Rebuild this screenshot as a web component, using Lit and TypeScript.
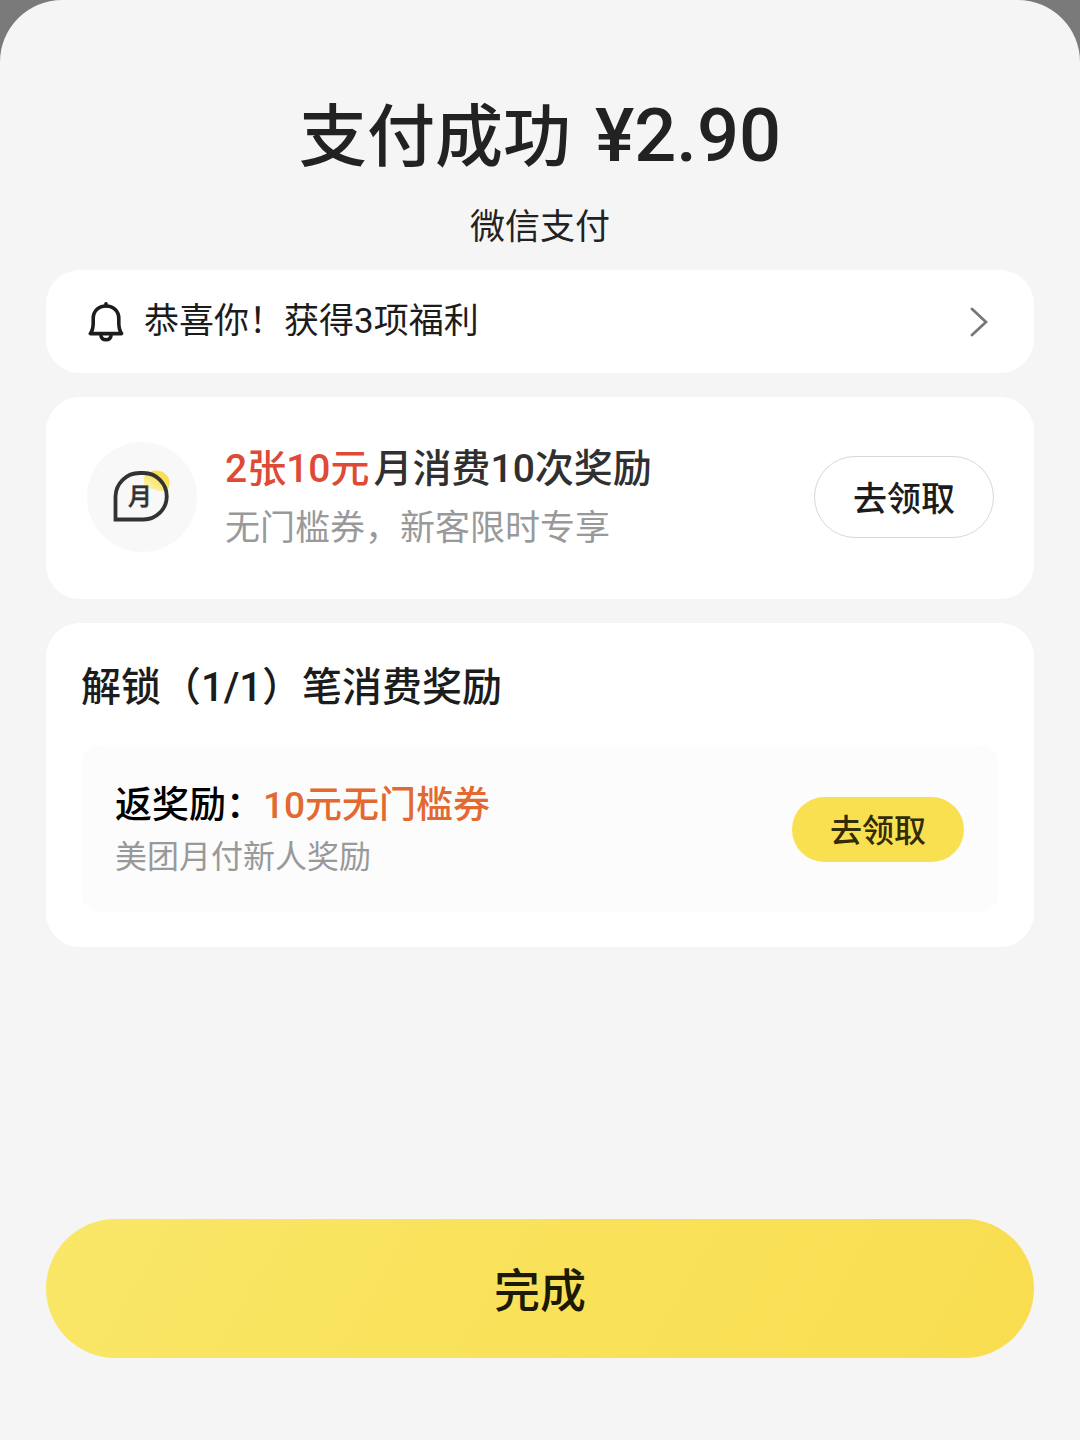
import { LitElement, html, css } from "lit";
import { customElement, property } from "lit/decorators.js";

@customElement("bell-icon")
class BellIcon extends LitElement {
  static styles = css`
    :host { display: block; }
    svg { display: block; width: 36px; height: 42px; }
  `;
  render() {
    return html`<svg viewBox="0 0 36 42" fill="none" stroke="#1c1c1c" stroke-width="3.6"
      stroke-linecap="round" stroke-linejoin="round" aria-hidden="true">
      <path d="M18 2.8V5" />
      <path d="M18 5C10.4 5 5.2 10.4 5.2 17.500V22C5.2 27 4.6 29.500 2.4 32.6H33.6C31.4 29.500 30.8 27 30.8 22V17.500C30.8 10.400 25.600 5 18 5Z" />
      <path d="M12.8 34C13.2 37 15 38.800 18 38.800C21 38.800 22.800 37 23.2 34" stroke-linecap="butt" />
    </svg>`;
  }
}

@customElement("month-badge")
class MonthBadge extends LitElement {
  static styles = css`
    :host { display: block; flex: none; }
    svg { display: block; width: 110px; height: 110px; }
    .mark {
      font-family: "Noto Sans CJK SC", sans-serif;
      font-size: 24px;
      font-weight: 500;
    }
  `;
  render() {
    return html`<svg viewBox="0 0 110 110" aria-hidden="true">
      <defs>
        <linearGradient id="glow" x1="1" y1="0" x2="0" y2="1">
          <stop offset="0.3" stop-color="#f9e04f" />
          <stop offset="1" stop-color="#fbf6c8" />
        </linearGradient>
      </defs>
      <circle cx="55" cy="55" r="55" fill="#f8f8f8" />
      <path d="M57 35C60 31 64 28.500 69 28.500C77 28.500 82.500 34 82.500 41C82.500 44 82 46 80 49C74 50 64 48 57 43Z" fill="url(#glow)" />
      <path d="M28.500 77.500V54.500A24 24 0 0 1 52.500 31H56.500A23.250 23.250 0 0 1 56.500 77.500Z"
        fill="none" stroke="#333" stroke-width="3.800" />
      <text class="mark" x="53" y="63" text-anchor="middle" fill="#333" stroke="#333" stroke-width="0.500">月</text>
    </svg>`;
  }
}

@customElement("reward-row")
class RewardRow extends LitElement {
  @property() variant: "outline" | "solid" = "outline";
  @property() note = "";

  static styles = css`
    :host { display: block; flex: 1; min-width: 0; }
    .row { display: flex; align-items: center; justify-content: space-between; gap: 24px; }
    .copy { min-width: 0; padding-top: 4px; }
    .title, .note { margin: 0; }
    .title { font-weight: 500; }
    .note { color: #999; }
    .action {
      flex: none;
      font: inherit;
      font-weight: 500;
      padding: 0 0 2px;
      cursor: pointer;
    }
    .outline .title { font-size: 39px; line-height: 60px; color: #303030; }
    .outline .note { font-size: 35px; line-height: 60px; }
    .outline .action {
      width: 180px;
      height: 82px;
      border: 1px solid #d8d8d8;
      border-radius: 41px;
      background: #fff;
      color: #1c1c1c;
      font-size: 34px;
    }
    .solid .title { font-size: 37px; line-height: 52px; color: #000; }
    .solid .note { font-size: 32px; line-height: 50px; }
    .solid .action {
      width: 172px;
      height: 65px;
      border: 0;
      border-radius: 33px;
      background: #f9e050;
      color: #332b05;
      font-size: 32px;
    }
  `;
  render() {
    return html`<div class="row ${this.variant}">
      <div class="copy">
        <p class="title"><slot></slot></p>
        <p class="note">${this.note}</p>
      </div>
      <button class="action" type="button">去领取</button>
    </div>`;
  }
}

@customElement("app-root")
class AppRoot extends LitElement {
  static styles = css`
    :host {
      display: block;
      background: #7a7a7a;
      font-family: Roboto, "Noto Sans CJK SC", sans-serif;
      color: #222;
    }
    * { box-sizing: border-box; }
    .sheet {
      display: flex;
      flex-direction: column;
      min-height: 100vh;
      padding: 86px 46px 82px;
      border-radius: 62px 62px 0 0;
      background: #f5f5f5;
    }
    .result { text-align: center; margin-bottom: 18px; }
    .headline {
      display: flex;
      justify-content: center;
      align-items: baseline;
      gap: 24px;
      margin: 0 0 16px;
      font-size: 68px;
      line-height: 100px;
      font-weight: 500;
    }
    .amount { font-size: 74px; }
    .method { margin: 0; font-size: 35px; line-height: 48px; }
    .cards { display: flex; flex-direction: column; gap: 24px; margin-bottom: 48px; }
    .card { border-radius: 34px; background: #fff; }
    .notice {
      display: flex;
      align-items: center;
      gap: 20px;
      padding: 27px 46px 26px 42px;
      color: #1c1c1c;
      font-size: 35px;
      line-height: 50px;
      text-decoration: none;
    }
    .notice-text { flex: 1; }
    .chevron { display: block; width: 18px; height: 30px; }
    .monthly { display: flex; align-items: center; gap: 28px; padding: 38px 40px 40px 41px; }
    .red { color: #de4a35; margin-right: 4px; }
    .unlock { padding: 37px 35px 35px; }
    .unlock-title { margin: 0 0 29px; font-size: 40px; line-height: 56px; font-weight: 500; color: #1c1c1c; }
    .unlock-item { padding: 31px 35px 30px 34px; border-radius: 20px; background: #fcfcfc; }
    .orange { color: #e2692f; }
    .done {
      margin-top: auto;
      width: 100%;
      height: 139px;
      border: 0;
      border-radius: 70px;
      padding: 0 0 4px;
      background: linear-gradient(120deg, #f9e768 0%, #f9e25a 50%, #f8dd50 100%);
      color: #1c1a05;
      font: inherit;
      font-size: 46px;
      font-weight: 500;
      cursor: pointer;
    }
  `;
  render() {
    return html`<main class="sheet">
      <header class="result">
        <h1 class="headline"><span>支付成功</span><span class="amount">¥2.90</span></h1>
        <p class="method">微信支付</p>
      </header>
      <div class="cards">
        <a class="card notice" href="#benefits">
          <bell-icon></bell-icon>
          <span class="notice-text">恭喜你！获得3项福利</span>
          <svg class="chevron" viewBox="0 0 18 30" fill="none" stroke="#777" stroke-width="2.800"
            stroke-linecap="round" aria-hidden="true"><path d="M2 2L16 15L2 28" /></svg>
        </a>
        <section class="card monthly">
          <month-badge></month-badge>
          <reward-row variant="outline" note="无门槛券，新客限时专享"><span class="red">2张10元</span>月消费10次奖励</reward-row>
        </section>
        <section class="card unlock">
          <h2 class="unlock-title">解锁（1/1）笔消费奖励</h2>
          <div class="unlock-item">
            <reward-row variant="solid" note="美团月付新人奖励">返奖励：<span class="orange">10元无门槛券</span></reward-row>
          </div>
        </section>
      </div>
      <button class="done" type="button">完成</button>
    </main>`;
  }
}
